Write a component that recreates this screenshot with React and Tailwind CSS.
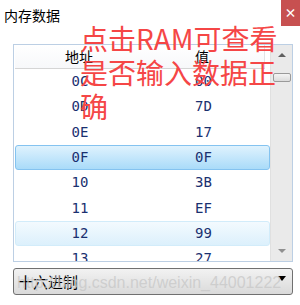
import React from "react";

const rows = [
  ["0C", "00"],
  ["0D", "7D"],
  ["0E", "17"],
  ["0F", "0F"],
  ["10", "3B"],
  ["11", "EF"],
  ["12", "99"],
  ["13", "27"],
];

export default function App() {
  return (
    <div className="relative w-[300px] h-[305px] bg-white overflow-hidden font-['Noto_Sans_CJK_SC',sans-serif]">
      {/* title bar */}
      <div className="flex justify-between h-[26px]">
        <div className="pl-[4px] pt-[6px] text-[14px] leading-[18px] text-black">内存数据</div>
        <div className="w-[19px] h-[26px] bg-[#c75050] flex items-center justify-center text-white text-[12px] font-bold leading-none">
          ×
        </div>
      </div>

      {/* list box */}
      <div className="ml-[13px] mt-[18px] w-[280px] h-[218px] border border-[#bccfe4] flex">
        <div className="w-[256px] flex flex-col pl-[1px] overflow-hidden">
          <div className="flex h-[24px] w-[250px] shrink-0 border-b border-[#d5d5d5] bg-gradient-to-b from-white to-[#f7f8fa] text-[14px] text-black">
            <div className="w-[125px] flex items-center justify-center pl-[3px]">地址</div>
            <div className="w-[125px] flex items-center justify-center border-r border-[#e2e3e5]">值</div>
          </div>
          {rows.map(([a, v], i) => (
            <div key={a} className="h-[25.3px] shrink-0 w-[255px] py-[0.5px]">
              <div
                className={
                  "h-full flex items-center rounded-[3px] border font-['DejaVu_Sans_Mono',monospace] text-[14px] text-[#1a3070] " +
                  (i === 3
                    ? "border-[#84c3f0] bg-gradient-to-b from-[#dff2fd] to-[#a9dbf9]"
                    : i === 6
                    ? "border-[#d2ecfa] bg-gradient-to-b from-[#f3fafe] to-[#dcf0fc]"
                    : "border-transparent")
                }
              >
                <div className="w-[125px] text-center pl-[3px]">{a}</div>
                <div className="w-[125px] text-center">{v}</div>
              </div>
            </div>
          ))}
        </div>
        {/* scrollbar */}
        <div className="w-[22px] bg-[#eaeaea] border-l border-[#e0e0e0] flex flex-col items-center">
          <div className="h-[20px] flex items-center justify-center">
            <div className="w-0 h-0 border-l-[4px] border-r-[4px] border-b-[4px] border-l-transparent border-r-transparent border-b-[#606060]" />
          </div>
          <div className="mt-[8px] w-[18px] h-[9px] rounded-[2px] border border-[#9a9a9a] bg-gradient-to-b from-[#f4f4f4] to-[#dcdcdc]" />
          <div className="flex-1" />
          <div className="h-[20px] flex items-center justify-center">
            <div className="w-0 h-0 border-l-[4px] border-r-[4px] border-t-[4px] border-l-transparent border-r-transparent border-t-[#909090]" />
          </div>
        </div>
      </div>

      {/* combo box */}
      <div className="ml-[13px] mt-[6px] w-[280px] h-[27px] rounded-[3px] border border-[#707070] bg-gradient-to-b from-[#f2f2f2] to-[#dadada] flex items-center justify-between pl-[4px] pr-[6px]">
        <span className="text-[15px] text-black leading-none">十六进制</span>
        <div className="w-0 h-0 border-l-[4px] border-r-[4px] border-t-[5px] border-l-transparent border-r-transparent border-t-black mb-[6px]" />
      </div>

      {/* watermark */}
      <div className="absolute left-[17px] top-[273px] text-[16px] leading-[20px] text-[#c8c8c8]/80 font-['Liberation_Sans',sans-serif] whitespace-nowrap">
        http://blog.csdn.net/weixin_44001222
      </div>

      {/* red annotation */}
      <div className="absolute left-[80px] top-[21px] w-[200px] text-[28px] leading-[34px] text-[#f54646] font-['Noto_Sans_CJK_SC',sans-serif]">
        点击RAM可查看是否输入数据正确
      </div>
    </div>
  );
}
